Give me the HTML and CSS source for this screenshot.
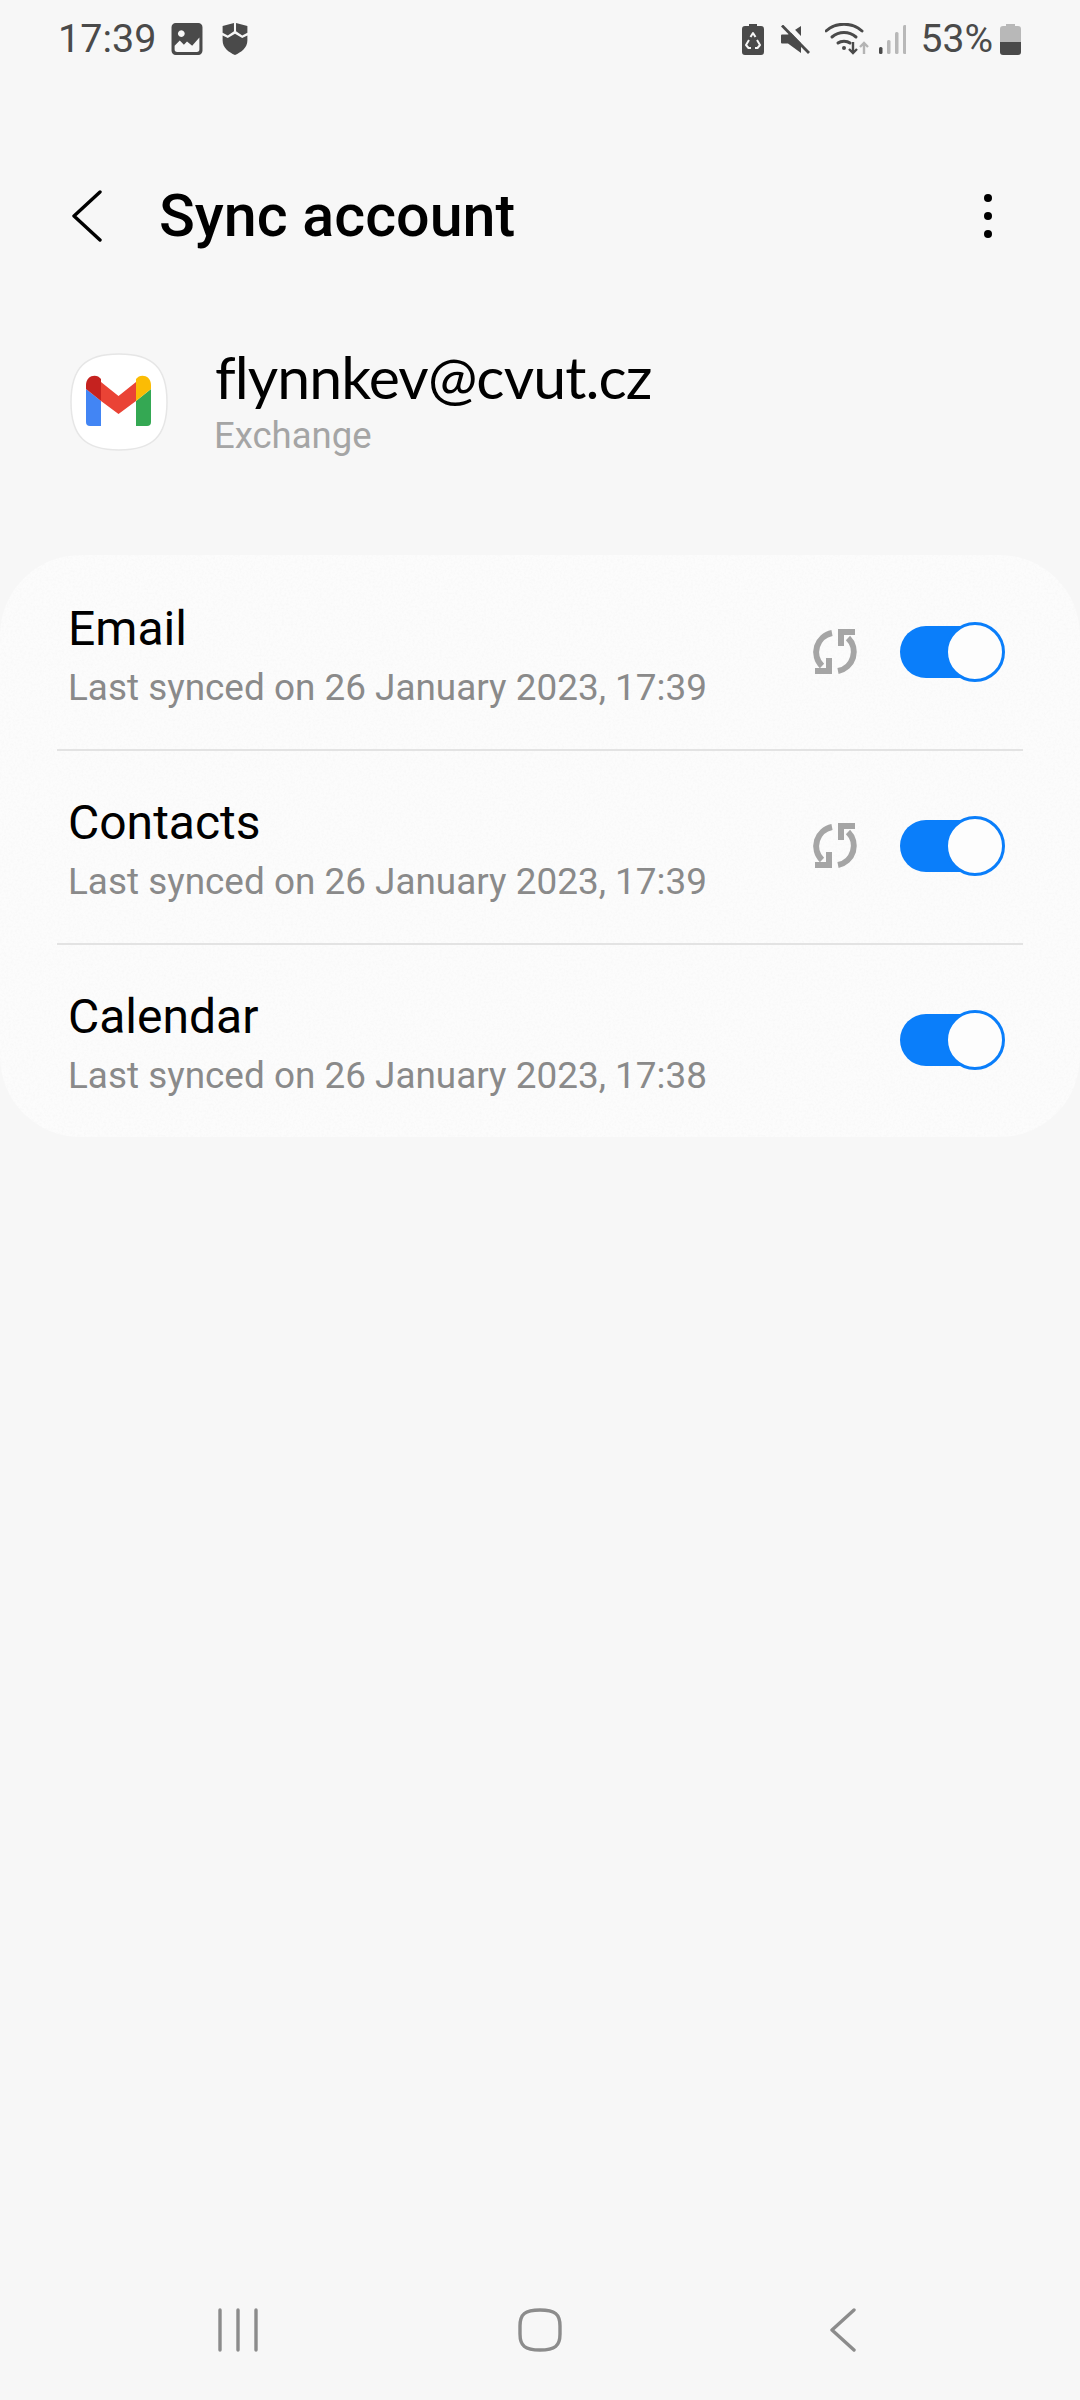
FILE: index.html
```html
<!DOCTYPE html>
<html lang="en">
<head>
<meta charset="utf-8">
<title>Sync account</title>
<link rel="stylesheet" href="styles.css">
</head>
<body>
<div class="page">
  <div class="status">
    <span class="time">17:39</span>
    <svg class="ic-pic" viewBox="0 0 30 31"><path fill="#4a4a4a" fill-rule="evenodd" d="M4 0H26a4 4 0 0 1 4 4V27a4 4 0 0 1-4 4H4a4 4 0 0 1-4-4V4a4 4 0 0 1 4-4ZM3 22V25.500A2.500 2.500 0 0 0 5.500 28H24.500A2.500 2.500 0 0 0 27 25.500V14L20 22 15 18 12 21 8 17ZM9.500 7a3.300 3.300 0 1 0 .01 0Z"/></svg>
    <svg class="ic-shield" viewBox="0 0 24 31"><path fill="#4a4a4a" d="M0 3 11 0V8L5 12 0 9.500ZM13 0 24 3V9.500L19 12 13 8ZM12 10.500 19 14.500 24 12V17C24 24 18 28.500 12 31 6 28.500 0 24 0 17V12L5 14.500Z"/></svg>
    <span class="spring"></span>
    <svg class="ic-eco" viewBox="0 0 22 31"><path fill="#4a4a4a" d="M7 0H15V2H19a3 3 0 0 1 3 3V28a3 3 0 0 1-3 3H3a3 3 0 0 1-3-3V5a3 3 0 0 1 3-3H7Z"/><path fill="none" stroke="#f7f7f7" stroke-width="2" stroke-linejoin="round" d="M8.500 13 11 9 13.500 13M15 16 18 21 15.500 24H13M9 24H6.500L4 21 7 16"/></svg>
    <svg class="ic-mute" viewBox="0 0 29 29"><path fill="#4a4a4a" d="M1 9.500H7L20 1V28L7 18.500H1a1 1 0 0 1-1-1V10.500a1 1 0 0 1 1-1Z"/><path stroke="#f7f7f7" stroke-width="5" d="M6 0 29 24"/><path stroke="#4a4a4a" stroke-width="2.800" d="M1 0.500 28 28"/></svg>
    <svg class="ic-wifi" viewBox="0 0 44 32"><g fill="none" stroke="#4a4a4a" stroke-width="3" stroke-linecap="round"><path d="M1 8C11-1 27-1 37 8"/><path d="M7 14C14 8 24 8 31 14"/><path d="M13 20C16 17.500 22 17.500 25 20"/></g><circle cx="19" cy="25" r="2" fill="#4a4a4a"/><path fill="none" stroke="#4a4a4a" stroke-width="2.400" d="M28 19V30M24 26 28 30 32 26"/><path fill="none" stroke="#b4b4b4" stroke-width="2.400" d="M39 31V20M35 24 39 20 43 24"/></svg>
    <svg class="ic-signal" viewBox="0 0 27 29"><g fill="#b8b8b8"><rect y="22" width="3.500" height="7" rx="1.500" fill="#4a4a4a"/><rect x="8" y="15" width="3.500" height="14" rx="1.500"/><rect x="16" y="7" width="3.500" height="22" rx="1.500"/><rect x="24" y="0" width="3.500" height="29" rx="1.500"/></g></svg>
    <span class="pct">53%</span>
    <svg class="ic-batt" viewBox="0 0 21 31"><path fill="#b8b8b8" d="M6 0H15V2H18a3 3 0 0 1 3 3V18H0V5a3 3 0 0 1 3-3H6Z"/><path fill="#4a4a4a" d="M0 18H21V28a3 3 0 0 1-3 3H3a3 3 0 0 1-3-3Z"/></svg>
  </div>

  <header class="appbar">
    <svg class="back" viewBox="0 0 30 52"><path fill="none" stroke="#000" stroke-width="3.400" stroke-linecap="round" stroke-linejoin="round" d="M28 2 2 26 28 50"/></svg>
    <h1 class="title">Sync account</h1>
    <svg class="more" viewBox="0 0 10 46"><circle cx="5" cy="5" r="4" /><circle cx="5" cy="23" r="4" /><circle cx="5" cy="41" r="4" /></svg>
  </header>

  <section class="account">
    <svg class="logo" viewBox="0 0 98 98">
      <path fill="#fff" stroke="#e6e6e6" stroke-width="1.500" d="M49 1C83 1 97 15 97 49S83 97 49 97 1 83 1 49 15 1 49 1Z"/>
      <path fill="#4285f4" d="M16 36 31 48V73H20a4 4 0 0 1-4-4Z"/>
      <path fill="#34a853" d="M66 48 81 36V69a4 4 0 0 1-4 4H66Z"/>
      <path fill="#ea4335" d="M31 29 48.500 43 66 29V48L48.500 61 31 48Z"/>
      <path fill="#c5221f" d="M16 36V32C16 22 27 20 31 26V48Z"/>
      <path fill="#fbbc04" d="M66 48V26C70 20 81 22 81 32V36Z"/>
    </svg>
    <div class="account-text">
      <div class="address">flynnkev@cvut.cz</div>
      <div class="kind">Exchange</div>
    </div>
  </section>

  <section class="card">
    <div class="row">
      <div class="row-text"><div class="row-title">Email</div><div class="row-sub">Last synced on 26 January 2023, 17:39</div></div>
      <svg class="sync" viewBox="0 0 46 46"><g fill="none" stroke="#a5a5a5" stroke-width="6"><path d="M20 4A19.500 19.500 0 0 0 10 37"/><path d="M36 9A19.500 19.500 0 0 1 26 42"/><path d="M17 29V42H3M29 17V3H43"/></g></svg>
      <div class="toggle"><span class="thumb"></span></div>
    </div>
    <div class="divider"></div>
    <div class="row">
      <div class="row-text"><div class="row-title">Contacts</div><div class="row-sub">Last synced on 26 January 2023, 17:39</div></div>
      <svg class="sync" viewBox="0 0 46 46"><g fill="none" stroke="#a5a5a5" stroke-width="6"><path d="M20 4A19.500 19.500 0 0 0 10 37"/><path d="M36 9A19.500 19.500 0 0 1 26 42"/><path d="M17 29V42H3M29 17V3H43"/></g></svg>
      <div class="toggle"><span class="thumb"></span></div>
    </div>
    <div class="divider"></div>
    <div class="row">
      <div class="row-text"><div class="row-title">Calendar</div><div class="row-sub">Last synced on 26 January 2023, 17:38</div></div>
      <div class="toggle"><span class="thumb"></span></div>
    </div>
  </section>

  <nav class="navbar">
    <svg class="nav-recent" viewBox="0 0 40 44"><g stroke="#8c8c8c" stroke-width="3.400" stroke-linecap="round"><path d="M2 2V42M20 2V42M38 2V42"/></g></svg>
    <svg class="nav-home" viewBox="0 0 44 44"><path fill="none" stroke="#8c8c8c" stroke-width="3.400" d="M22 2C37 2 42 6 42 18V26C42 38 37 42 22 42S2 38 2 26V18C2 6 7 2 22 2Z"/></svg>
    <svg class="nav-back" viewBox="0 0 26 44"><path fill="none" stroke="#8c8c8c" stroke-width="3.400" stroke-linecap="round" stroke-linejoin="round" d="M24 2 2 22 24 42"/></svg>
  </nav>
</div>
</body>
</html>
```

FILE: styles.css
```css
* { box-sizing: border-box; }
html, body { margin: 0; padding: 0; }
body { background: #f7f7f7; font-family: "Roboto", "Liberation Sans", sans-serif; }
.page { width: 1080px; height: 2400px; display: flex; flex-direction: column; background: #f7f7f7; }

.status { height: 78px; padding: 0 59px 0 58px; display: flex; align-items: center; color: #4a4a4a; }
.status svg { flex: none; display: block; }
.time { font-size: 39.500px; line-height: 44px; margin-top: -1px; }
.pct { font-size: 39px; line-height: 44px; margin-top: -1px; margin-left: 15px; }
.spring { flex: 1; }
.ic-pic { width: 32px; height: 32px; margin-left: 15px; }
.ic-shield { width: 26px; height: 32px; margin-left: 19px; }
.ic-eco { width: 22px; height: 31px; }
.ic-mute { width: 29px; height: 29px; margin-left: 17px; }
.ic-wifi { width: 44px; height: 32px; margin-left: 15px; }
.ic-signal { width: 27px; height: 29px; margin-left: 10px; }
.ic-batt { width: 21px; height: 31px; margin-left: 7px; }

.appbar { height: 86px; margin-top: 95px; padding: 0 87px 0 72px; display: flex; align-items: center; }
.back { width: 30px; height: 52px; flex: none; }
.title { margin: 0 0 0 57px; flex: 1; font-size: 59.200px; line-height: 64px; font-weight: 500; color: #000; }
.more { width: 10px; height: 46px; flex: none; fill: #000; }

.account { margin-top: 94px; padding-left: 70px; display: flex; align-items: center; height: 98px; }
.logo { width: 98px; height: 98px; flex: none; }
.account-text { margin-left: 47px; display: flex; flex-direction: column; }
.address { font-family: "Lato", "Open Sans", sans-serif; font-size: 59px; line-height: 60px; color: #000; letter-spacing: -0.900px; }
.kind { font-size: 36.500px; line-height: 42px; color: #a5a5a5; margin: 8px 0 0 -1px; }

.card {
  margin-top: 104px;
  padding: 1px 0;
  background-color: #fcfcfc;
  background-image: url("data:image/svg+xml,%3Csvg xmlns='http://www.w3.org/2000/svg' width='300' height='300'%3E%3Cfilter id='n'%3E%3CfeTurbulence type='fractalNoise' baseFrequency='.45' numOctaves='2'/%3E%3CfeColorMatrix values='0 0 0 0 .5 0 0 0 0 .5 0 0 0 0 .5 0 0 0 .12 -.045'/%3E%3C/filter%3E%3Crect width='300' height='300' filter='url(%23n)'/%3E%3C/svg%3E");
  border-radius: 80px;
  display: flex;
  flex-direction: column;
}
.row { height: 192px; padding: 0 75px 0 68px; display: flex; align-items: center; }
.row-text { flex: 1; padding-top: 5px; display: flex; flex-direction: column; }
.row-title { font-size: 48px; line-height: 56px; color: #000; }
.row-sub { font-size: 36.900px; line-height: 42px; color: #8a8a8a; margin-top: 10px; }
.divider { height: 2px; margin: 1px 57px -1px; background: #e3e3e3; }
.sync { width: 46px; height: 46px; flex: none; }
.toggle { position: relative; width: 100px; height: 52px; margin-left: 42px; margin-right: 5px; border-radius: 26px; background: #0a7efa; flex: none; }
.row-text + .toggle { margin-left: 0; }
.thumb { position: absolute; right: -5px; top: -4px; width: 60px; height: 60px; border-radius: 50%; background: #fdfdfd; border: 3px solid #0a7efa; }

.navbar { margin-top: auto; height: 108px; padding-bottom: 32px; display: flex; align-items: center; }
.nav-recent { width: 40px; height: 44px; margin-left: 218px; }
.nav-home { width: 44px; height: 44px; margin-left: 260px; }
.nav-back { width: 26px; height: 44px; margin-left: 268px; }
```
